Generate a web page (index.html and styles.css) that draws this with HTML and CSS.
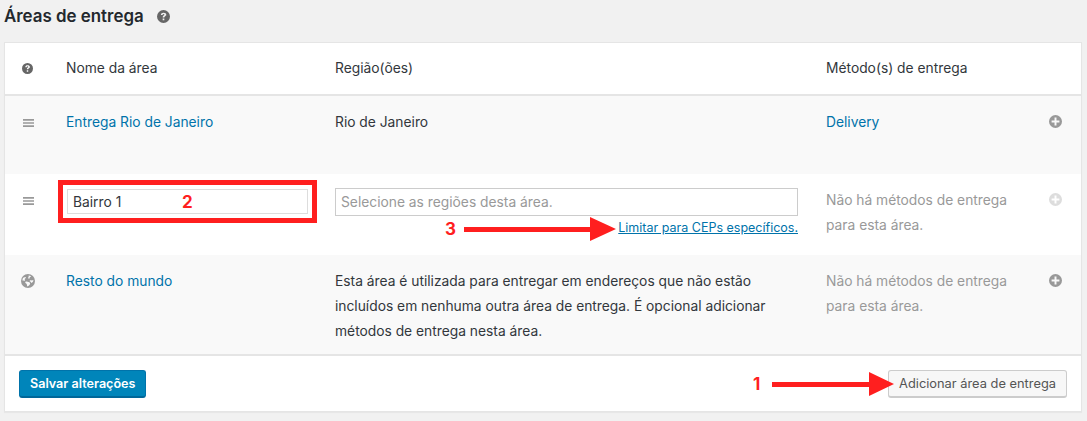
FILE: index.html
```html
<!DOCTYPE html>
<html lang="pt-BR">
<head>
  <meta charset="UTF-8">
  <title>Áreas de entrega</title>
  <link rel="stylesheet" href="styles.css">
</head>
<body>
  <div class="heading">
    <h2>Áreas de entrega</h2>
    <svg class="icon help-big" viewBox="0 0 20 20"><use href="#i-help"/></svg>
  </div>

  <svg class="defs" width="0" height="0">
    <defs>
      <symbol id="i-help" viewBox="0 0 20 20">
        <path fill="currentColor" fill-rule="evenodd" d="M10 0a10 10 0 1 0 0 20a10 10 0 0 0 0-20zM11.3 15.7H8.7v-2.5h2.6zM13.9 8.2c-.3.6-.8 1-1.3 1.4c-.8.5-1.2.9-1.3 1.9H8.8c0-1.600.5-2.400 1.500-3.100c.6-.4 1.100-.7 1.100-1.300c0-.6-.5-1-1.300-1c-.9 0-1.500.5-1.600 1.500H6c.1-2.300 1.700-3.500 4.100-3.500c2.500 0 4.200 1.200 4.200 3.100c0 .5-.1 1-.4 1.500z"/>
      </symbol>
      <symbol id="i-menu" viewBox="0 0 11 8">
        <path fill="currentColor" d="M0 0h11v1.700H0zM0 3.150h11v1.700H0zM0 6.300h11V8H0z"/>
      </symbol>
      <symbol id="i-plus" viewBox="0 0 20 20">
        <path fill="currentColor" fill-rule="evenodd" d="M10 0a10 10 0 1 0 0 20a10 10 0 0 0 0-20zM16 11.500h-4.500V16h-3v-4.500H4v-3h4.500V4h3v4.500H16z"/>
      </symbol>
      <symbol id="i-globe" viewBox="0 0 20 20">
        <path fill="currentColor" fill-rule="evenodd" d="M10 0a10 10 0 1 0 0 20a10 10 0 0 0 0-20zM3 5.500c1-.3 1.800-1 2.800-1.200c.8-.2 1.400.3 1.200 1.100c-.3.9-1.500.9-1.700 1.900c-.1.800.6 1.200.3 2c-.3.7-1.300.3-1.900 0c-.6-.3-1.300-.2-1.700.1c.1-1.400.4-2.800 1-3.900zM11 2.200c1.300.2 2.500.7 3.500 1.500c-.5.700-1.500.5-2 1.200c-.4.600.2 1.200-.4 1.700c-.7.500-1.700.1-1.900-.8c-.2-.8.6-1.200.8-1.900c.1-.6-.4-1.100 0-1.700zM9 17.700c-.6-1.200-.2-2.500-1-3.500c-.6-.8-1.800-1-1.900-2.100c-.1-1 .9-1.500 1.800-1.400c1.100.1 1.800.9 2.900.9c.9 0 1.600.3 2 1.100c.5.900.2 1.800-.5 2.500c-.8.900-1.600 1.700-3.300 2.500zM15 13c-.5-.5-.6-1.300-1.200-1.800c-.5-.4-1.300-.4-1.400-1.100c-.1-.8.800-1 1.500-1c1 0 1.900.4 3.700-.4c.2 1.500-.4 3-2.600 4.300z"/>
      </symbol>
    </defs>
  </svg>

  <div class="card">
    <div class="row row-head">
      <div class="col-icon"><svg class="icon help-small" viewBox="0 0 20 20"><use href="#i-help"/></svg></div>
      <div class="col-name">Nome da área</div>
      <div class="col-region">Região(ões)</div>
      <div class="col-method">Método(s) de entrega</div>
      <div class="col-add"></div>
    </div>

    <div class="row row-alt row-first">
      <div class="col-icon"><svg class="icon menu" viewBox="0 0 11 8"><use href="#i-menu"/></svg></div>
      <div class="col-name"><a href="#">Entrega Rio de Janeiro</a></div>
      <div class="col-region">Rio de Janeiro</div>
      <div class="col-method"><a href="#">Delivery</a></div>
      <div class="col-add"><svg class="icon plus" viewBox="0 0 20 20"><use href="#i-plus"/></svg></div>
    </div>

    <div class="row row-edit">
      <div class="col-icon"><svg class="icon menu" viewBox="0 0 11 8"><use href="#i-menu"/></svg></div>
      <div class="col-name">
        <div class="name-box"><div class="field field-name">Bairro 1</div></div>
      </div>
      <div class="col-region">
        <div class="field field-region">Selecione as regiões desta área.</div>
        <div class="limit"><a href="#">Limitar para CEPs específicos.</a></div>
      </div>
      <div class="col-method muted">Não há métodos de entrega<br>para esta área.</div>
      <div class="col-add"><svg class="icon plus faded" viewBox="0 0 20 20"><use href="#i-plus"/></svg></div>
    </div>

    <div class="row row-alt row-world">
      <div class="col-icon"><svg class="icon globe" viewBox="0 0 20 20"><use href="#i-globe"/></svg></div>
      <div class="col-name"><a href="#">Resto do mundo</a></div>
      <div class="col-region">Esta área é utilizada para entregar em endereços que não estão incluídos em nenhuma outra área de entrega. É opcional adicionar métodos de entrega nesta área.</div>
      <div class="col-method muted">Não há métodos de entrega<br>para esta área.</div>
      <div class="col-add"><svg class="icon plus" viewBox="0 0 20 20"><use href="#i-plus"/></svg></div>
    </div>

    <div class="card-foot">
      <button class="btn btn-primary">Salvar alterações</button>
      <button class="btn btn-plain">Adicionar área de entrega</button>
    </div>

    <!-- red annotations drawn on top of the screenshot -->
    <span class="mark mark-1">1</span>
    <span class="mark mark-2">2</span>
    <span class="mark mark-3">3</span>
    <svg class="arrow arrow-1" viewBox="0 0 122 24"><path d="M0 10H97V0L122 12L97 24V15H0z"/></svg>
    <svg class="arrow arrow-3" viewBox="0 0 152 24"><path d="M0 10H126V0L152 12L126 24V15H0z"/></svg>
  </div>
</body>
</html>
```

FILE: styles.css
```css
body {
  margin: 0;
  padding: 0 5px 9px 4px;
  background: #f1f1f1;
  color: #32373c;
  font-family: Inter, "Noto Sans", sans-serif;
  font-size: 13.800px;
  line-height: 25px;
}
a {
  color: #0073aa;
  text-decoration: none;
}
.defs {
  position: absolute;
}
.icon {
  display: block;
}
.heading {
  display: flex;
  align-items: center;
  gap: 13px;
  height: 42px;
  padding-bottom: 10px;
  box-sizing: border-box;
}
.heading h2 {
  margin: 0;
  font-size: 16.900px;
  font-weight: 600;
  line-height: 32px;
  color: #23282d;
}
.help-big {
  width: 13px;
  height: 13px;
  color: #666;
}
.card {
  position: relative;
  background: #fff;
  border: 1px solid #e5e5e5;
  box-shadow: 0 1px 1px rgba(0,0,0,0.04);
  height: 370px;
  box-sizing: border-box;
}
.row {
  display: grid;
  grid-template-columns: 61px 269px 491px 210px 46px;
  box-sizing: border-box;
  padding-top: 14px;
}
.row-head {
  height: 53px;
  border-bottom: 2px solid #e5e5e5;
  padding-top: 13px;
}
.row-alt {
  background: #f9f9f9;
}
.row-first {
  height: 78px;
}
.row-edit {
  height: 81px;
}
.row-world {
  height: 101px;
  border-bottom: 2px solid #e5e5e5;
}
.col-icon {
  padding: 6px 0 0 16px;
}
.row-head .col-icon {
  padding-top: 7px;
}
.col-region {
  padding-right: 15px;
}
.col-add {
  padding-left: 13px;
}
.help-small {
  width: 11px;
  height: 11px;
  color: #666;
  margin-left: 1px;
}
.menu {
  width: 11px;
  height: 8px;
  color: #999;
  margin: 2.500px 0 0 2px;
}
.globe {
  width: 14px;
  height: 14px;
  color: #999;
  margin-top: -1px;
}
.plus {
  width: 13px;
  height: 13px;
  color: #999;
  margin-top: 5px;
}
.plus.faded {
  color: #ddd;
}
.muted {
  color: #999;
}
.name-box {
  width: 259px;
  margin: -8px 0 0 -8px;
  padding: 4px;
  border: 5px solid #ff1f1f;
  box-sizing: border-box;
}
.field {
  box-sizing: border-box;
  border: 1px solid #ddd;
  background: #fff;
  height: 25px;
  line-height: 24px;
  padding-left: 5px;
}
.field-region {
  width: 463px;
  height: 28px;
  line-height: 26px;
  border: 1px solid #ccc;
  color: #999;
}
.limit {
  width: 463px;
  text-align: right;
  font-size: 12.500px;
  line-height: 16px;
  margin-top: 4px;
}
.limit a {
  text-decoration: underline;
}
.card-foot {
  display: flex;
  justify-content: space-between;
  align-items: center;
  height: 55px;
  padding: 0 14px;
  box-sizing: border-box;
}
.btn {
  font-family: inherit;
  height: 28px;
  border-radius: 3px;
  padding: 0 10px;
  cursor: pointer;
}
.btn-primary {
  font-size: 12.600px;
  background: #0085ba;
  border: 1px solid #0073aa;
  border-bottom: 2px solid #006799;
  color: #fff;
  font-weight: 600;
}
.btn-plain {
  font-size: 12.850px;
  background: #f7f7f7;
  border: 1px solid #ccc;
  border-bottom: 2px solid #ccc;
  color: #555;
}
.mark {
  position: absolute;
  color: #ff1f1f;
  font-size: 17px;
  font-weight: 700;
  line-height: 20px;
}
.mark-1 {
  left: 748px;
  top: 331px;
}
.mark-2 {
  left: 177px;
  top: 149px;
}
.mark-3 {
  left: 440px;
  top: 176px;
}
.arrow {
  position: absolute;
  fill: #ff1f1f;
}
.arrow-1 {
  left: 767px;
  top: 329px;
  width: 122px;
  height: 24px;
}
.arrow-3 {
  left: 459px;
  top: 174px;
  width: 152px;
  height: 24px;
}
```
